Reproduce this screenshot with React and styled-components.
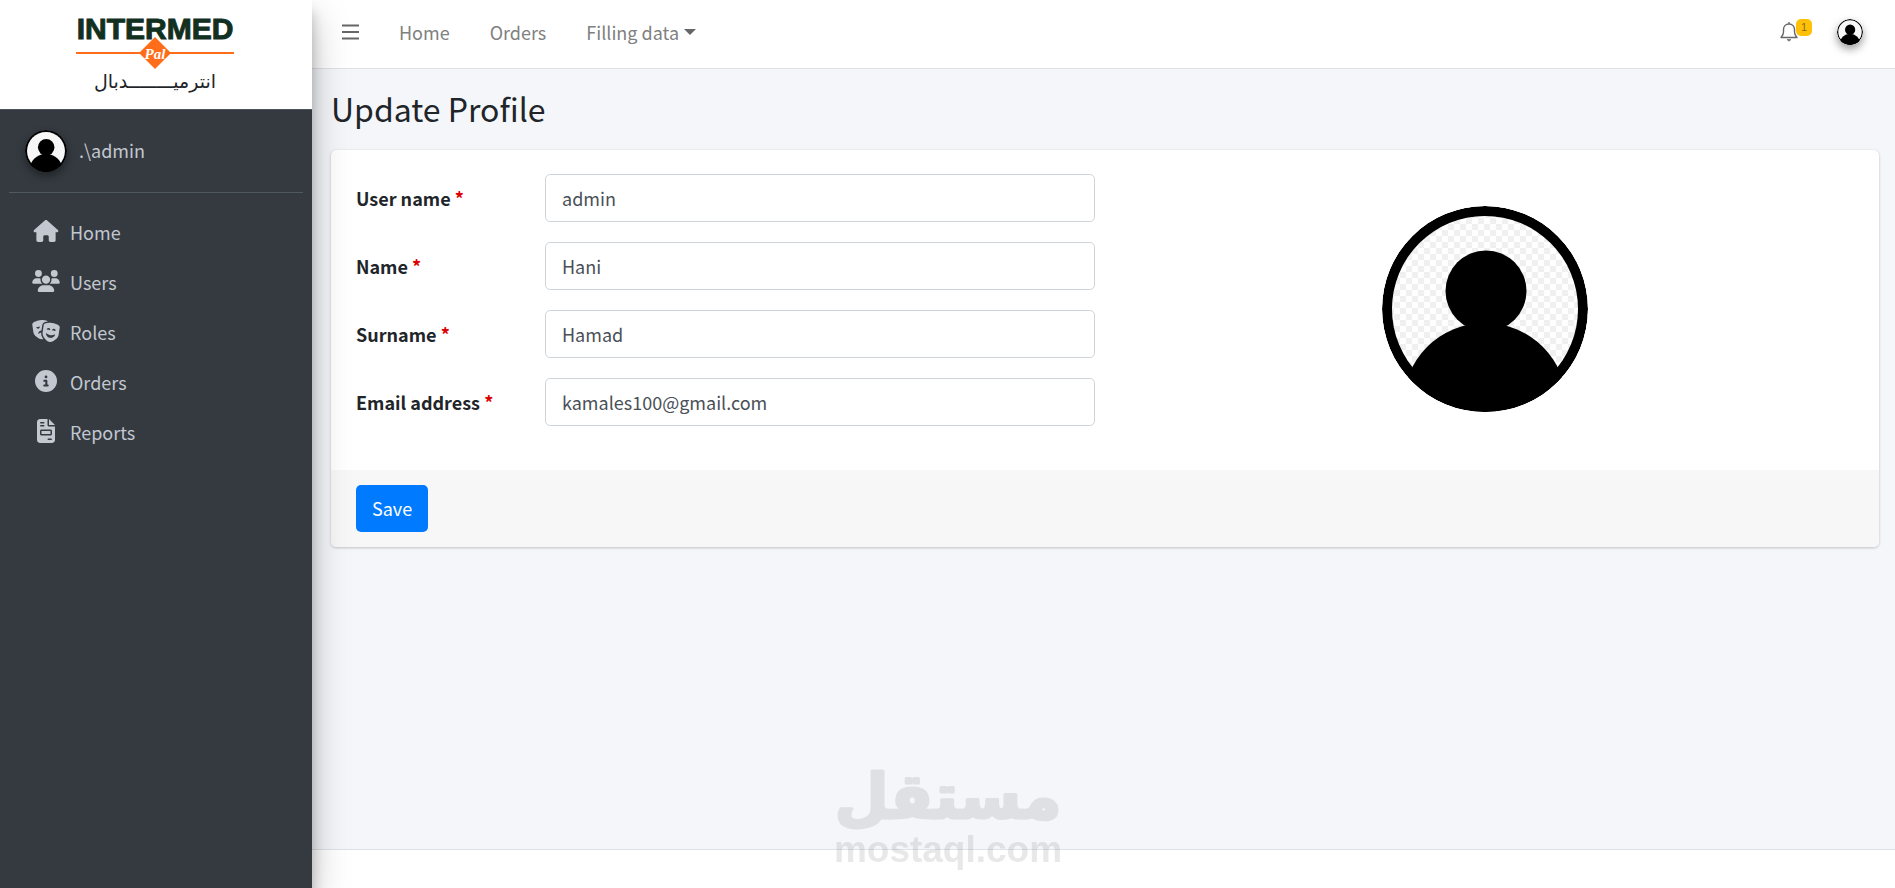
import React from 'react';
import styled, { createGlobalStyle } from 'styled-components';
import { FaHouse, FaUsers, FaMasksTheater, FaCircleInfo, FaFileInvoice } from 'react-icons/fa6';

const GlobalStyle = createGlobalStyle`
  *, *::before, *::after {
    box-sizing: border-box;
  }
  body {
    margin: 0;
    font-family: 'Noto Sans CJK SC', 'Noto Sans', sans-serif;
    font-size: 18px;
    line-height: 30px;
    color: #212529;
    background-color: #f4f6f9;
  }
`;

const Layout = styled.div`
  display: flex;
  min-height: 100vh;
`;

const Sidebar = styled.aside`
  position: relative;
  z-index: 2;
  flex: 0 0 312px;
  background-color: #343a40;
  color: #c2c7d0;
  box-shadow: 0 18px 35px rgba(0, 0, 0, 0.25), 0 12px 12px rgba(0, 0, 0, 0.22);
`;

const Brand = styled.a`
  display: flex;
  justify-content: center;
  height: 110px;
  padding-top: 8px;
  background-color: #ffffff;
  border-bottom: 1px solid #4b545c;
`;

const UserPanel = styled.div`
  display: flex;
  align-items: center;
  gap: 12px;
  height: 83px;
  margin: 0 9px;
  padding-left: 16px;
  border-bottom: 1px solid #4f5962;
`;

const UserName = styled.a`
  padding-bottom: 2px;
  color: #c2c7d0;
  text-decoration: none;
`;

const SideNav = styled.nav`
  display: flex;
  flex-direction: column;
  gap: 2px;
  padding: 15px 10px;
`;

const SideLink = styled.a`
  display: flex;
  align-items: center;
  gap: 8px;
  height: 48px;
  padding: 0 20px;
  color: #c2c7d0;
  text-decoration: none;
`;

const SideIcon = styled.span`
  display: flex;
  justify-content: center;
  width: 32px;
  padding-bottom: 2px;

  svg {
    width: 28px;
    height: ${props => (props.$tall ? 24 : 22)}px;
  }
`;

const Main = styled.div`
  flex: 1;
  min-width: 0;
  display: flex;
  flex-direction: column;
`;

const Navbar = styled.header`
  display: flex;
  align-items: center;
  height: 69px;
  padding: 0 32px 4px 30px;
  background-color: #ffffff;
  border-bottom: 1px solid #dee2e6;
`;

const NavLinks = styled.nav`
  display: flex;
  gap: 40px;
  margin-left: 40px;
`;

const NavLink = styled.a`
  display: flex;
  align-items: center;
  gap: 5px;
  color: #808080;
  text-decoration: none;
`;

const Caret = styled.span`
  border-top: 6px solid #666666;
  border-left: 6px solid transparent;
  border-right: 6px solid transparent;
`;

const IconButton = styled.button`
  position: relative;
  display: flex;
  padding: 0;
  border: 0;
  background: none;
  color: #666666;
`;

const NavRight = styled.div`
  display: flex;
  align-items: center;
  gap: 39px;
  margin-left: auto;
`;

const Badge = styled.span`
  position: absolute;
  top: -3px;
  left: 16px;
  padding: 0 5px;
  border-radius: 5px;
  background-color: #ffc107;
  color: #8a6d1c;
  font-size: 11px;
  line-height: 17px;
`;

const Picture = styled.svg`
  display: block;
  width: ${props => props.$size}px;
  height: ${props => props.$size}px;
  border-radius: 50%;
  box-shadow: ${props => (props.$raised ? '0 4px 8px rgba(0, 0, 0, 0.4)' : 'none')};
`;

const Content = styled.main`
  flex: 1;
  padding: 19px 16px 20px 19px;
`;

const PageTitle = styled.h1`
  margin: 0 0 21px;
  font-size: 32px;
  line-height: 41px;
  font-weight: 400;
`;

const Card = styled.form`
  border-radius: 5px;
  background-color: #ffffff;
  box-shadow: 0 0 1px rgba(0, 0, 0, 0.13), 0 1px 3px rgba(0, 0, 0, 0.2);
  overflow: hidden;
`;

const CardBody = styled.div`
  display: grid;
  grid-template-columns: 1fr 1fr;
  gap: 20px;
  padding: 24px 25px 44px;
`;

const Fields = styled.div`
  display: flex;
  flex-direction: column;
  gap: 20px;
`;

const Field = styled.div`
  display: grid;
  grid-template-columns: 189px 1fr;
  align-items: center;
`;

const Label = styled.label`
  font-weight: 700;
`;

const Required = styled.span`
  color: #dd0000;
`;

const Input = styled.input`
  width: 100%;
  height: 48px;
  padding: 0 16px;
  border: 1px solid #ced4da;
  border-radius: 5px;
  background-color: #ffffff;
  color: #495057;
  font: inherit;
`;

const PictureColumn = styled.div`
  display: flex;
  justify-content: center;
  align-items: flex-start;
  padding-top: 32px;
`;

const CardFooter = styled.div`
  padding: 15px 25px;
  background-color: #f7f7f7;
`;

const SaveButton = styled.button`
  display: block;
  height: 47px;
  padding: 0 16px 2px;
  border: 0;
  border-radius: 5px;
  background-color: #007bff;
  color: #ffffff;
  font: inherit;
`;

const Footer = styled.footer`
  height: 39px;
  background-color: #ffffff;
  border-top: 1px solid #dee2e6;
`;

const Watermark = styled.svg`
  position: fixed;
  z-index: 3;
  left: 50%;
  bottom: 16px;
  margin-left: -128px;
  width: 256px;
  height: 112px;
  pointer-events: none;
`;

const menu = [
  { label: 'Home', Icon: FaHouse },
  { label: 'Users', Icon: FaUsers },
  { label: 'Roles', Icon: FaMasksTheater },
  { label: 'Orders', Icon: FaCircleInfo },
  { label: 'Reports', Icon: FaFileInvoice, tall: true },
];

const fields = [
  { id: 'username', label: 'User name', type: 'text', value: 'admin' },
  { id: 'name', label: 'Name', type: 'text', value: 'Hani' },
  { id: 'surname', label: 'Surname', type: 'text', value: 'Hamad' },
  { id: 'email', label: 'Email address', type: 'email', value: 'kamales100@gmail.com' },
];

const Logo = () => (
  <svg width="168" height="94" viewBox="0 0 168 94" role="img" aria-label="Intermed Pal">
    <text x="83" y="31" textAnchor="middle" fontFamily="'Liberation Sans', sans-serif" fontWeight="700" fontSize="30" fill="#12301f" stroke="#12301f" strokeWidth="1">INTERMED</text>
    <path d="M4 45H162" stroke="#ff6d1b" strokeWidth="2" />
    <path d="M83 29L99 45L83 61L67 45Z" fill="#ff6d1b" />
    <text x="83" y="51" textAnchor="middle" fontFamily="'Liberation Serif', serif" fontStyle="italic" fontWeight="700" fontSize="15" fill="#ffffff">Pal</text>
    <text x="83" y="80" textAnchor="middle" fontFamily="'DejaVu Sans', sans-serif" fontSize="19" fill="#1f2326">انترميــــــــدبال</text>
  </svg>
);

const Avatar = ({ size, raised }) => (
  <Picture $size={size} $raised={raised} viewBox="0 0 206 206" role="img" aria-label="Profile picture">
    <defs>
      <pattern id={`checks-${size}`} width="12" height="12" patternUnits="userSpaceOnUse">
        <rect width="12" height="12" fill="#ffffff" />
        <path d="M0 0H6V6H0ZM6 6H12V12H6Z" fill="#f0f0f0" />
      </pattern>
      <clipPath id={`round-${size}`}>
        <circle cx="103" cy="103" r="103" />
      </clipPath>
    </defs>
    <g clipPath={`url(#round-${size})`}>
      <circle cx="103" cy="103" r="103" fill="#000000" />
      <circle cx="103" cy="103" r="93" fill={`url(#checks-${size})`} />
      <circle cx="104" cy="85" r="40.500" fill="#000000" />
      <circle cx="103" cy="199" r="82" fill="#000000" />
    </g>
  </Picture>
);

const App = () => (
  <>
    <GlobalStyle />
    <Layout>
      <Sidebar>
        <Brand href="#"><Logo /></Brand>
        <UserPanel>
          <Avatar size={42} raised />
          <UserName href="#">.\admin</UserName>
        </UserPanel>
        <SideNav>
          {menu.map(({ label, Icon, tall }) => (
            <SideLink href="#" key={label}>
              <SideIcon $tall={tall}><Icon /></SideIcon>
              {label}
            </SideLink>
          ))}
        </SideNav>
      </Sidebar>
      <Main>
        <Navbar>
          <IconButton type="button" aria-label="Toggle menu">
            <svg width="17" height="16" viewBox="0 0 17 16" stroke="currentColor" strokeWidth="2.200">
              <path d="M0 1.500H17M0 8H17M0 14.500H17" />
            </svg>
          </IconButton>
          <NavLinks>
            <NavLink href="#">Home</NavLink>
            <NavLink href="#">Orders</NavLink>
            <NavLink href="#">Filling data <Caret /></NavLink>
          </NavLinks>
          <NavRight>
            <IconButton type="button" aria-label="Notifications">
              <svg width="18" height="20" viewBox="0 0 18 20" fill="none" stroke="currentColor" strokeWidth="1.400" strokeLinejoin="round">
                <path d="M9 0V2M9 2C5.500 2 3.500 4.500 3.500 7.500V10C3.500 12.500 2.500 13.500 1 15.500H17C15.500 13.500 14.500 12.500 14.500 10V7.500C14.500 4.500 12.500 2 9 2Z" />
                <path d="M7 17.500H11L9 19.200Z" fill="currentColor" strokeWidth="0.600" />
              </svg>
              <Badge>1</Badge>
            </IconButton>
            <IconButton type="button" aria-label="Account">
              <Avatar size={26} raised />
            </IconButton>
          </NavRight>
        </Navbar>
        <Content>
          <PageTitle>Update Profile</PageTitle>
          <Card>
            <CardBody>
              <Fields>
                {fields.map((field) => (
                  <Field key={field.id}>
                    <Label htmlFor={field.id}>{field.label} <Required>*</Required></Label>
                    <Input id={field.id} type={field.type} defaultValue={field.value} />
                  </Field>
                ))}
              </Fields>
              <PictureColumn>
                <Avatar size={206} />
              </PictureColumn>
            </CardBody>
            <CardFooter>
              <SaveButton type="button">Save</SaveButton>
            </CardFooter>
          </Card>
        </Content>
        <Footer />
      </Main>
    </Layout>
    <Watermark viewBox="0 0 256 112" fill="#7f8080" stroke="#7f8080" strokeLinejoin="round" opacity="0.18">
      <text x="128" y="58" textAnchor="middle" fontFamily="'DejaVu Sans', sans-serif" fontWeight="700" fontSize="62" strokeWidth="3">مستقل</text>
      <text x="128" y="102" textAnchor="middle" fontFamily="'Liberation Sans', sans-serif" fontWeight="700" fontSize="37" strokeWidth="0">mostaql.com</text>
    </Watermark>
  </>
);

export default App;
